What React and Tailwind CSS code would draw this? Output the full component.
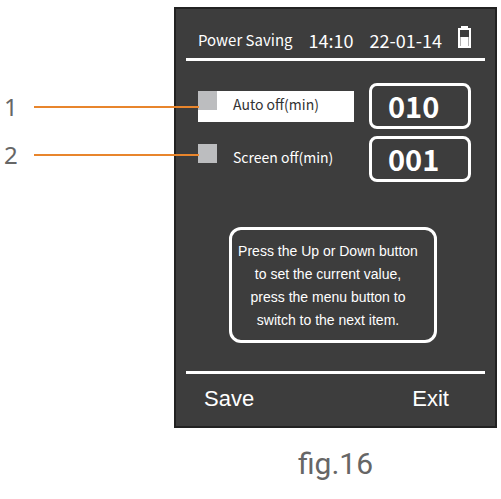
import { useState } from "react";

const callouts = ["1", "2"];

const settings = [
  { id: "auto-off", label: "Auto off(min)", value: "010" },
  { id: "screen-off", label: "Screen off(min)", value: "001" },
];

const BatteryIcon = () => (
  <svg width="13" height="22" viewBox="0 0 13 22" aria-hidden="true">
    <path d="M3 0h7v2h3v20H0V2h3z" fill="#fff" />
    <rect x="2" y="4" width="9" height="7" fill="#3d3d3d" />
    <path d="M2.5 11v9M10.5 11v9" stroke="#3d3d3d" strokeWidth="1" opacity="0.4" />
  </svg>
);

const SettingRow = ({ item, active, value, onSelect, onChange }) => (
  <div className="flex items-center justify-between">
    <div className={`flex h-[31px] w-[156px] items-start ${active ? "bg-white text-[#333]" : "text-white"}`}>
      <input
        type="checkbox"
        id={item.id}
        checked={active}
        onChange={onSelect}
        className="size-[19px] shrink-0 appearance-none bg-[#bcbdbf]"
      />
      <label htmlFor={item.id} className="ml-4 self-center pb-1 whitespace-nowrap text-sm leading-5">
        {item.label}
      </label>
    </div>
    <input
      type="text"
      aria-label={item.label}
      value={value}
      onChange={(e) => onChange(e.target.value)}
      className="h-[46px] w-[102px] rounded-lg border-3 border-white bg-transparent pb-[2px] pl-4 text-[29px] leading-none font-bold text-white outline-none"
    />
  </div>
);

const App = () => {
  const [selected, setSelected] = useState("auto-off");
  const [values, setValues] = useState(Object.fromEntries(settings.map((s) => [s.id, s.value])));

  return (
    <main className="grid grid-cols-[174px_1fr] bg-white pt-[7px] pr-1 font-['Noto_Sans_CJK_SC',sans-serif]">
      {/* Callout numbers, their lines run into the screen */}
      <div className="z-10 flex flex-col gap-4 pt-[84px]">
        {callouts.map((n) => (
          <div key={n} className="-mr-[25px] flex h-8 items-center pl-1 font-['Noto_Sans',sans-serif] text-2xl text-[#666]">
            <span className="w-[30px]">{n}</span>
            <span className="h-[2px] flex-1 bg-[#e8852c]" />
          </div>
        ))}
      </div>

      <section className="border-2 border-[#222] bg-[#3d3d3d] px-[10px] text-white">
        <header className="flex h-[52px] items-end justify-between border-b-3 border-white pr-[14px] pb-[10px] pl-3">
          <h1 className="text-[15px] leading-4">Power Saving</h1>
          <span className="text-lg leading-4">14:10</span>
          <span className="text-lg leading-4">22-01-14</span>
          <BatteryIcon />
        </header>

        <div className="flex flex-col gap-[7px] pt-[22px] pr-[14px] pl-3">
          {settings.map((item) => (
            <SettingRow
              key={item.id}
              item={item}
              active={selected === item.id}
              value={values[item.id]}
              onSelect={() => setSelected(item.id)}
              onChange={(v) => setValues({ ...values, [item.id]: v })}
            />
          ))}
        </div>

        <p className="mr-auto mb-7 ml-[43px] mt-[45px] w-[208px] rounded-xl border-3 border-white pt-[10px] pb-2 pr-[10px] text-center font-['Liberation_Sans',sans-serif] text-sm leading-[23px]">
          Press the Up or Down button
          <br />
          to set the current value,
          <br />
          press the menu button to
          <br />
          switch to the next item.
        </p>

        <footer className="flex justify-between border-t-3 border-white pt-[9px] pr-[36px] pb-[11px] pl-[18px] font-['Liberation_Sans',sans-serif] text-[22px] leading-8">
          <button type="button">Save</button>
          <button type="button">Exit</button>
        </footer>
      </section>

      <p className="col-start-2 pt-4 text-center font-['Roboto',sans-serif] text-[30px] leading-10 text-[#666]">fig.16</p>
    </main>
  );
};

export default App;
